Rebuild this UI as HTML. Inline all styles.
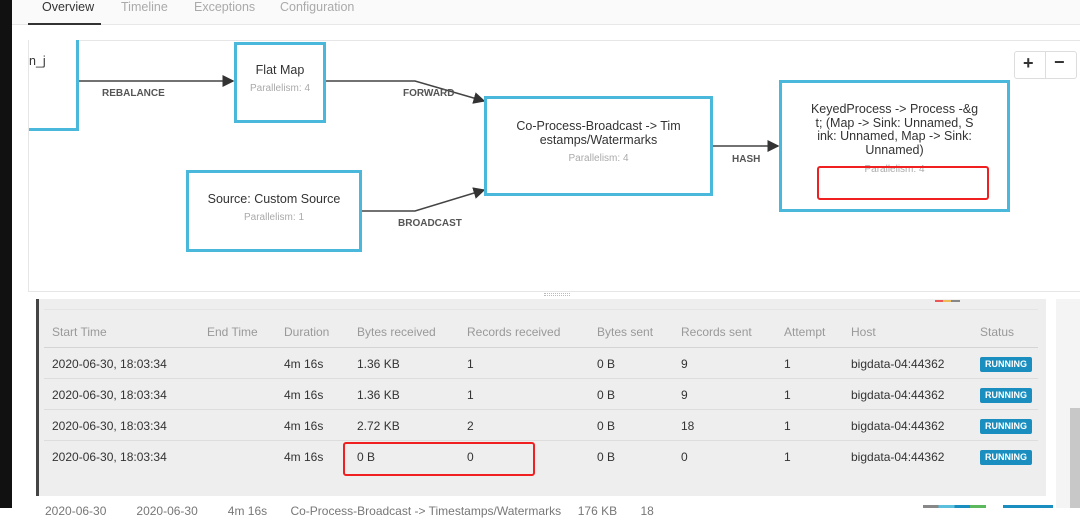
<!DOCTYPE html>
<html><head><meta charset="utf-8"><style>
*{margin:0;padding:0;box-sizing:border-box}
body{width:1080px;height:508px;overflow:hidden;background:#fff;font-family:"Liberation Sans",Arial,sans-serif;position:relative;color:#333}
.a{position:absolute;white-space:nowrap}
.node{position:absolute;border:3px solid #4ab8da;background:#fff;text-align:center;font-size:12.5px;color:#333}
.par{font-size:10px;color:#aaa}
.lbl{position:absolute;font-size:10px;font-weight:bold;color:#555}
.th{position:absolute;font-size:12px;color:#999}
.td{position:absolute;font-size:12px;color:#333}
.b{position:absolute;background:#1b8ec0;color:#fff;font-size:9px;font-weight:bold;width:52px;height:15px;line-height:15px;text-align:center;border-radius:2px;left:980px}
.ln{position:absolute;left:44px;width:994px;height:1px;background:#ddd}
</style></head><body>
<div class="a" style="left:0;top:0;width:12px;height:508px;background:#111"></div>
<div class="a" style="left:12px;top:0;width:1068px;height:25px;background:#fafafa;border-bottom:1px solid #e8e8e8"></div>
<div class="a" style="left:42px;top:0;font-size:12.5px;color:#333">Overview</div>
<div class="a" style="left:28px;top:23px;width:73px;height:2px;background:#333"></div>
<div class="a" style="left:121px;top:0;font-size:12.5px;color:#aaa">Timeline</div>
<div class="a" style="left:194px;top:0;font-size:12.5px;color:#aaa">Exceptions</div>
<div class="a" style="left:280px;top:0;font-size:12.5px;color:#aaa">Configuration</div>
<div class="a" style="left:28px;top:40px;width:1060px;height:252px;border:1px solid #e6e6e6"></div>
<svg class="a" style="left:0;top:0" width="1080" height="300">
<defs><marker id="m" markerWidth="8" markerHeight="8" refX="7" refY="4" orient="auto"><path d="M0,0L8,4L0,8z" fill="#333"/></marker></defs>
<g stroke="#444" stroke-width="1.5" fill="none">
<path d="M78,81H233" marker-end="url(#m)"/>
<path d="M325,81H415L484,101" marker-end="url(#m)"/>
<path d="M361,211H415L484,190" marker-end="url(#m)"/>
<path d="M712,146H778" marker-end="url(#m)"/>
</g></svg>
<div class="node" style="left:29px;top:40px;width:50px;height:91px;border-top:none;border-left:none"></div>
<div class="a" style="left:29px;top:54px;font-size:12.5px">n_j</div>
<div class="node" style="left:234px;top:42px;width:92px;height:81px;padding-top:18px">Flat Map<div class="par" style="margin-top:6px">Parallelism: 4</div></div>
<div class="node" style="left:186px;top:170px;width:176px;height:82px;padding-top:19px">Source: Custom Source<div class="par" style="margin-top:6px">Parallelism: 1</div></div>
<div class="node" style="left:484px;top:96px;width:229px;height:100px;padding-top:20px;line-height:14px">Co-Process-Broadcast -&gt; Tim<br>estamps/Watermarks<div class="par" style="margin-top:5px">Parallelism: 4</div></div>
<div class="node" style="left:779px;top:80px;width:231px;height:132px;padding-top:20px;line-height:13.5px">KeyedProcess -&gt; Process -&amp;g<br>t; (Map -&gt; Sink: Unnamed, S<br>ink: Unnamed, Map -&gt; Sink:<br>Unnamed)<div class="par" style="margin-top:6px">Parallelism: 4</div></div>
<div class="a" style="left:817px;top:166px;width:172px;height:34px;border:2px solid #f02020;border-radius:3px"></div>
<div class="lbl" style="left:102px;top:88px">REBALANCE</div>
<div class="lbl" style="left:403px;top:88px">FORWARD</div>
<div class="lbl" style="left:398px;top:218px">BROADCAST</div>
<div class="lbl" style="left:732px;top:154px">HASH</div>
<div class="a" style="left:1014px;top:51px;width:63px;height:28px;border:1px solid #ddd;border-radius:3px;background:#fff"></div>
<div class="a" style="left:1045px;top:51px;width:1px;height:28px;background:#ddd"></div>
<div class="a" style="left:1023px;top:53px;font-size:18px;font-weight:bold">+</div>
<div class="a" style="left:1054px;top:52px;font-size:18px;font-weight:bold">−</div>
<div class="a" style="left:544px;top:293px;width:26px;height:3px;border-top:1px dotted #bbb;border-bottom:1px dotted #bbb"></div>
<div class="a" style="left:36px;top:299px;width:1010px;height:197px;background:#eee;border-left:3px solid #444"></div>
<div class="a" style="left:935px;top:300px;width:8px;height:2px;background:#e55"></div>
<div class="a" style="left:943px;top:300px;width:8px;height:2px;background:#eb5"></div>
<div class="a" style="left:951px;top:300px;width:9px;height:2px;background:#888"></div>
<div class="a" style="left:1056px;top:299px;width:24px;height:209px;background:#f4f4f4"></div>
<div class="a" style="left:1070px;top:408px;width:10px;height:100px;background:#c8c8c8"></div>
<div class="ln" style="top:309px;background:#e4e4e4"></div>
<div class="th" style="left:52px;top:325px">Start Time</div>
<div class="th" style="left:207px;top:325px">End Time</div>
<div class="th" style="left:284px;top:325px">Duration</div>
<div class="th" style="left:357px;top:325px">Bytes received</div>
<div class="th" style="left:467px;top:325px">Records received</div>
<div class="th" style="left:597px;top:325px">Bytes sent</div>
<div class="th" style="left:681px;top:325px">Records sent</div>
<div class="th" style="left:784px;top:325px">Attempt</div>
<div class="th" style="left:851px;top:325px">Host</div>
<div class="th" style="left:980px;top:325px">Status</div>
<div class="ln" style="top:347px;background:#d4d4d4"></div>
<div class="ln" style="top:378px"></div><div class="ln" style="top:409px"></div><div class="ln" style="top:440px"></div>

<div class="td" style="left:52px;top:357px">2020-06-30, 18:03:34</div><div class="td" style="left:284px;top:357px">4m 16s</div><div class="td" style="left:357px;top:357px">1.36 KB</div><div class="td" style="left:467px;top:357px">1</div><div class="td" style="left:597px;top:357px">0 B</div><div class="td" style="left:681px;top:357px">9</div><div class="td" style="left:784px;top:357px">1</div><div class="td" style="left:851px;top:357px">bigdata-04:44362</div><div class="b" style="top:357px">RUNNING</div>

<div class="td" style="left:52px;top:388px">2020-06-30, 18:03:34</div><div class="td" style="left:284px;top:388px">4m 16s</div><div class="td" style="left:357px;top:388px">1.36 KB</div><div class="td" style="left:467px;top:388px">1</div><div class="td" style="left:597px;top:388px">0 B</div><div class="td" style="left:681px;top:388px">9</div><div class="td" style="left:784px;top:388px">1</div><div class="td" style="left:851px;top:388px">bigdata-04:44362</div><div class="b" style="top:388px">RUNNING</div>

<div class="td" style="left:52px;top:419px">2020-06-30, 18:03:34</div><div class="td" style="left:284px;top:419px">4m 16s</div><div class="td" style="left:357px;top:419px">2.72 KB</div><div class="td" style="left:467px;top:419px">2</div><div class="td" style="left:597px;top:419px">0 B</div><div class="td" style="left:681px;top:419px">18</div><div class="td" style="left:784px;top:419px">1</div><div class="td" style="left:851px;top:419px">bigdata-04:44362</div><div class="b" style="top:419px">RUNNING</div>

<div class="td" style="left:52px;top:450px">2020-06-30, 18:03:34</div><div class="td" style="left:284px;top:450px">4m 16s</div><div class="td" style="left:357px;top:450px">0 B</div><div class="td" style="left:467px;top:450px">0</div><div class="td" style="left:597px;top:450px">0 B</div><div class="td" style="left:681px;top:450px">0</div><div class="td" style="left:784px;top:450px">1</div><div class="td" style="left:851px;top:450px">bigdata-04:44362</div><div class="b" style="top:450px">RUNNING</div>

<div class="a" style="left:343px;top:442px;width:192px;height:34px;border:2px solid #f02020;border-radius:3px"></div>
<div class="td" style="left:45px;top:504px;color:#777">2020-06-30 &nbsp; &nbsp; &nbsp; &nbsp; 2020-06-30 &nbsp; &nbsp; &nbsp; &nbsp; 4m 16s &nbsp; &nbsp; &nbsp; Co-Process-Broadcast -&gt; Timestamps/Watermarks &nbsp; &nbsp; 176 KB &nbsp; &nbsp; &nbsp; 18</div>
<div class="a" style="left:923px;top:505px;width:63px;height:3px;background:linear-gradient(90deg,#888 25%,#5bc0de 25% 50%,#1b8ec0 50% 75%,#5cb85c 75%)"></div>
<div class="a" style="left:1003px;top:505px;width:50px;height:3px;background:#1b8ec0"></div>
</body></html>
